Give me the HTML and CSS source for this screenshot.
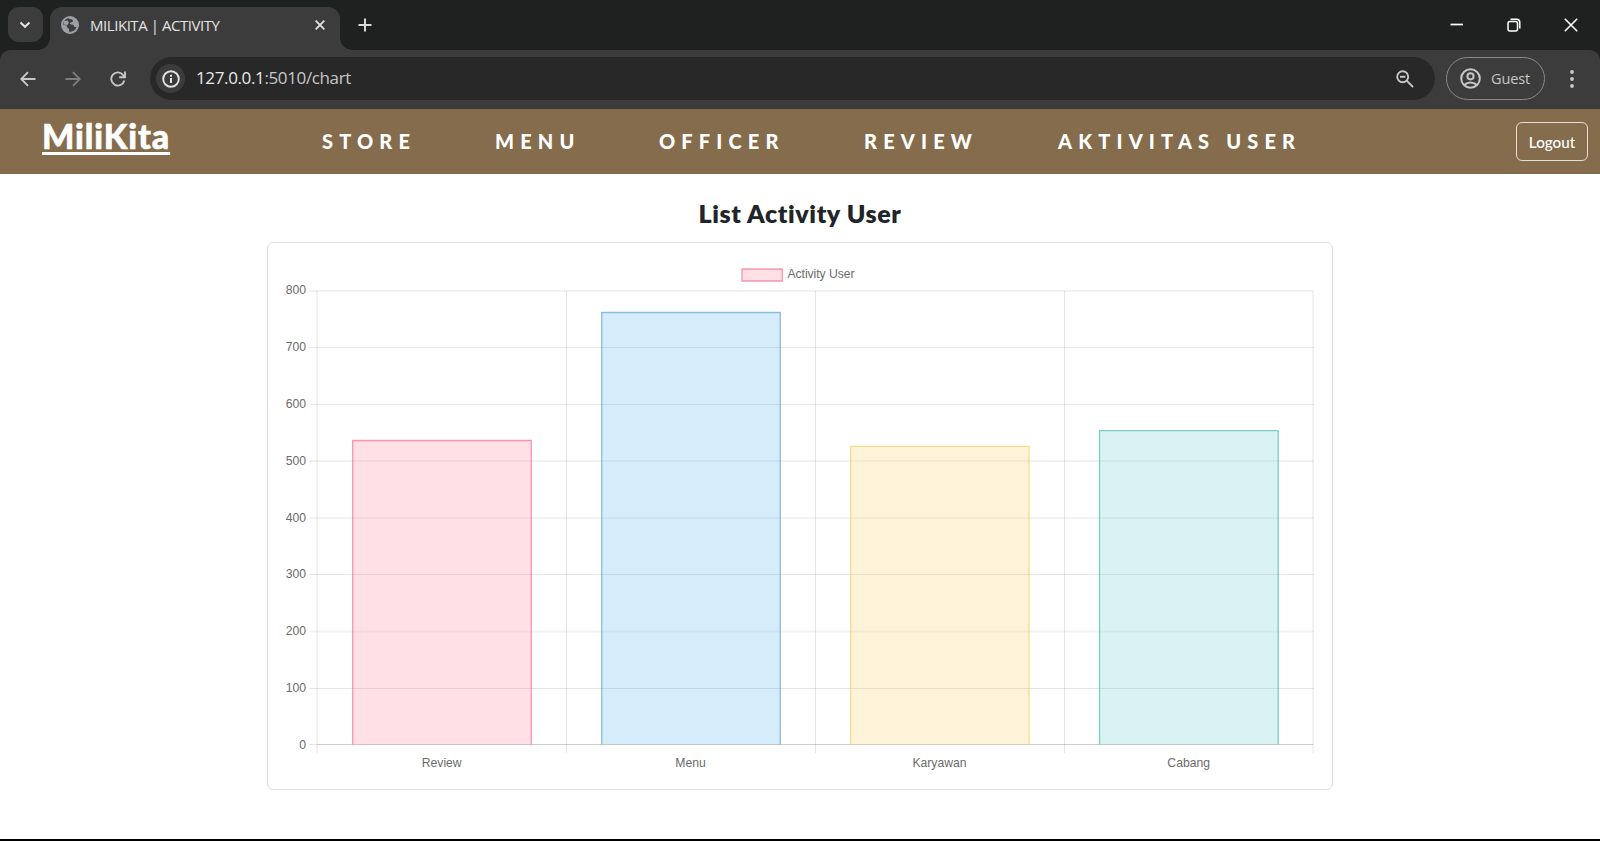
FILE: index.html
```html
<!DOCTYPE html>
<html lang="id">
<head>
<meta charset="utf-8">
<title>MILIKITA | ACTIVITY</title>
<link rel="stylesheet" href="styles.css">
</head>
<body>
<div class="tabstrip">
  <div class="tab-search"><svg width="12" height="8" viewBox="0 0 12 8"><path d="M1.5 1.5L6 5.8L10.5 1.5" fill="none" stroke="#e3e3e3" stroke-width="2"/></svg></div>
  <div class="tab">
    <svg class="globe" width="18" height="18" viewBox="0 0 18 18"><circle cx="9" cy="9" r="9" fill="#9aa0a6"/><path d="M7.500 2.200C8.500 3.500 12 2.800 12 5C12 6.500 9 6.200 9 7.500C9 9 12 8 12.800 9.500C13.300 10.500 12.500 11.200 15.500 11C14.500 14.500 11.500 15.800 8 15.800V13.500C8.500 12 6 12.500 6 10.500C6 9 4 9.500 2 8.500C2.200 5.500 4.500 2.800 7.500 2.200Z" fill="#3c3c3c"/><path d="M2.500 8.300L6 9.500L8 6.500L6.500 4.500L3 5Z" fill="#9aa0a6"/></svg>
    <span class="tab-title">MILIKITA | ACTIVITY</span>
    <svg class="tab-close" width="10" height="10" viewBox="0 0 10 10"><path d="M.7.7L9.300 9.300M9.300.7L.7 9.300" stroke="#e3e3e3" stroke-width="1.800"/></svg>
  </div>
  <svg class="new-tab" width="14" height="14" viewBox="0 0 14 14"><path d="M7 .5V13.500M.5 7H13.500" stroke="#dadada" stroke-width="2"/></svg>
  <div class="window-controls">
    <svg width="14" height="14" viewBox="0 0 14 14"><path d="M.5 6.500H13" stroke="#fff" stroke-width="1.700"/></svg>
    <svg width="14" height="14" viewBox="0 0 14 14" fill="none" stroke="#fff" stroke-width="1.500"><rect x="1" y="3.500" width="9.500" height="9.500" rx="2"/><path d="M3.500 1.200H9.500C11.800 1.200 12.800 2.300 12.800 4.500V10.500"/></svg>
    <svg width="14" height="14" viewBox="0 0 14 14"><path d="M.8.800L13.200 13.200M13.200.8L.8 13.200" stroke="#fff" stroke-width="1.600"/></svg>
  </div>
</div>
<div class="toolbar-wrap"><div class="toolbar">
  <svg class="back" width="16" height="16" viewBox="0 0 16 16" fill="none" stroke="#c7c7c7" stroke-width="1.900"><path d="M15.500 8H1.500M8 1.200L1.300 8L8 14.800"/></svg>
  <svg class="forward" width="16" height="16" viewBox="0 0 16 16" fill="none" stroke="#7d7d7d" stroke-width="1.900"><path d="M.5 8H14.500M8 1.200L14.700 8L8 14.800"/></svg>
  <svg class="reload" width="16" height="16" viewBox="0 0 16 16" fill="none" stroke="#c7c7c7" stroke-width="1.900"><path d="M14.300 9.500A6.600 6.600 0 1 1 13.300 4.200L14.500 6M15 .5V6.200H9.200"/></svg>
  <div class="address">
    <div class="site-info"><svg width="18" height="18" viewBox="0 0 18 18"><circle cx="9" cy="9" r="7.800" fill="none" stroke="#e3e3e3" stroke-width="1.900"/><path d="M9 8V13M9 4.800V6.800" stroke="#e3e3e3" stroke-width="2"/></svg></div>
    <span class="url"><b>127.0.0.1</b>:5010/chart</span>
    <svg class="zoom" width="18" height="18" viewBox="0 0 18 18" fill="none" stroke="#c7c7c7" stroke-width="1.900"><circle cx="6.700" cy="6.700" r="5.500"/><path d="M4 6.700H9.400M10.700 10.700L17 17"/></svg>
  </div>
  <div class="guest">
    <svg width="21" height="21" viewBox="0 0 21 21" fill="none" stroke="#c7c7c7" stroke-width="2"><circle cx="10.500" cy="10.500" r="9.300"/><circle cx="10.500" cy="8.300" r="3.100"/><path d="M4.300 17C7.500 13.700 13.500 13.700 16.700 17"/></svg>
    <span>Guest</span>
  </div>
  <svg class="menu-dots" width="4" height="18" viewBox="0 0 4 18" fill="#c7c7c7"><circle cx="2" cy="2" r="1.900"/><circle cx="2" cy="9" r="1.900"/><circle cx="2" cy="16" r="1.900"/></svg>
</div></div>

<nav class="navbar">
  <a class="brand">MiliKita</a>
  <div class="links">
    <a class="store">STORE</a><a class="menu">MENU</a><a class="officer">OFFICER</a><a class="review">REVIEW</a><a class="activity">AKTIVITAS USER</a>
  </div>
  <a class="logout">Logout</a>
</nav>

<main>
  <h1>List Activity User</h1>
  <div class="card">
    <svg class="chart" width="1064" height="546" viewBox="268 243 1064 546">
      <g class="grid">
        <path class="soft" d="M309.500 291H1313.500M309.500 461H1313.500M309.500 631.500H1313.500"/>
        <path d="M309.500 347.500H1313.500M309.500 404.500H1313.500M309.500 518H1313.500M309.500 574.500H1313.500M309.500 688.500H1313.500M309.500 744.500H1313.500"/>
        <path d="M566.500 291V753M815.500 291V753M1064.500 291V753"/>
        <path class="soft" d="M1313 291V753M317 291V753M317 291V744.500"/>
        <path d="M317 744.500H1313"/>
      </g>
      <g class="bars">
        <path class="pink" d="M352.700 744.500V440.500H531.300V744.500"/>
        <path class="blue" d="M601.700 744.500V312.500H780.300V744.500"/>
        <path class="yellow" d="M850.700 744.500V446.300H1029V744.500"/>
        <path class="teal" d="M1099.500 744.500V430.600H1278.200V744.500"/>
        <path class="pink" d="M742 269H782.300V281H742Z"/>
      </g>
      <g class="labels">
        <text x="787.500" y="278" textLength="67">Activity User</text>
        <g text-anchor="end">
          <text x="306" y="294.200">800</text><text x="306" y="351.400">700</text><text x="306" y="408">600</text><text x="306" y="464.800">500</text><text x="306" y="521.500">400</text><text x="306" y="578.200">300</text><text x="306" y="635">200</text><text x="306" y="692">100</text><text x="306" y="748.700">0</text>
        </g>
        <g text-anchor="middle">
          <text x="441.700" y="767">Review</text><text x="690.500" y="767">Menu</text><text x="939.500" y="767">Karyawan</text><text x="1188.700" y="767">Cabang</text>
        </g>
      </g>
    </svg>
  </div>
</main>
<div class="edge"></div>
</body>
</html>
```
FILE: styles.css
```css
* { box-sizing: border-box; }
body { margin: 0; height: 841px; display: flex; flex-direction: column; overflow: hidden; background: #fff; font-family: Lato, sans-serif; }
svg { display: block; flex: none; }

.tabstrip { height: 50px; flex: none; display: flex; background: #1f2120; padding-left: 7.500px; font-family: "Open Sans", sans-serif; }
.tab-search { width: 35px; height: 35px; margin-top: 7px; border-radius: 11px; background: #3c3c3c; display: flex; align-items: center; justify-content: center; }
.tab { position: relative; width: 290px; height: 43px; margin: 7px 0 0 7.500px; border-radius: 12px 12px 0 0; background: #3c3c3c; display: flex; align-items: center; padding: 0 15.500px 7px 11px; }
.tab::before, .tab::after { content: ""; position: absolute; bottom: 0; width: 12px; height: 12px; }
.tab::before { right: 100%; background: radial-gradient(circle at 0 0, transparent 11.500px, #3c3c3c 12px); }
.tab::after { left: 100%; background: radial-gradient(circle at 100% 0, transparent 11.500px, #3c3c3c 12px); }
.tab-title { margin-left: 11px; font-size: 15px; letter-spacing: -0.450px; color: #e3e3e3; white-space: nowrap; }
.tab-close { margin-left: auto; }
.new-tab { margin: 18px 0 0 18px; }
.window-controls { margin: 17.500px 22px 0 auto; display: flex; gap: 43px; }

.toolbar-wrap { height: 59px; flex: none; background: #1f2120; }
.toolbar { height: 59px; background: #3c3c3c; border-radius: 10px 10px 0 0; display: flex; align-items: center; padding: 0 26px 2px 20px; font-family: "Open Sans", sans-serif; }
.forward { margin-left: 28.500px; }
.reload { margin-left: 29px; }
.address { width: 1285px; height: 43px; margin-left: 24px; border-radius: 22px; background: #282828; display: flex; align-items: center; padding: 0 21px 0 6.500px; }
.site-info { width: 29px; height: 29px; border-radius: 50%; background: #3c3c3c; display: flex; align-items: center; justify-content: center; }
.url { margin-left: 11px; font-size: 17px; letter-spacing: -0.370px; color: #c7c7c7; line-height: 22px; padding-bottom: 1px; }
.url b { font-weight: 400; color: #e8e8e8; }
.zoom { margin-left: auto; }
.guest { width: 99px; height: 43px; margin-left: 11.500px; border: 1px solid #8a8a8a; border-radius: 22px; display: flex; align-items: center; gap: 10px; padding-left: 13px; color: #c7c7c7; font-size: 14.500px; letter-spacing: -0.150px; }
.menu-dots { margin-left: auto; }

.navbar { height: 65px; flex: none; display: flex; align-items: center; background: #846c4c; color: #fff; padding: 0 12px 0 42px; }
.brand { width: 127px; height: 47px; line-height: 36px; font-size: 34px; font-weight: 900; letter-spacing: 0.900px; -webkit-text-stroke: 0.600px #fff; text-decoration: underline; text-decoration-thickness: 3px; text-underline-offset: 3px; text-decoration-skip-ink: none; white-space: nowrap; }
.links { display: flex; margin-left: 153px; padding-bottom: 2px; font-size: 20px; font-weight: 900; letter-spacing: 6.150px; white-space: nowrap; }
.store { width: 173px; }
.menu { width: 164px; }
.officer { width: 205px; }
.review { width: 194px; }
.logout { width: 72px; height: 39px; margin-left: auto; border: 1px solid #e4ded5; border-radius: 6px; font-size: 15.200px; line-height: 38px; text-align: center; font-weight: 500; }

main { flex: 1; display: flex; flex-direction: column; align-items: center; }
h1 { margin: 24px 0 0; height: 44px; line-height: 30px; font-size: 25px; font-weight: 800; letter-spacing: 0.600px; color: #212529; white-space: nowrap; }
.card { width: 1066px; height: 548px; border: 1px solid #dfdfdf; border-radius: 6px; }
.grid path { fill: none; stroke: rgba(0, 0, 0, 0.1); stroke-width: 1; }
.grid .soft { stroke: rgba(0, 0, 0, 0.05); stroke-width: 2; }
.bars path { stroke-width: 1.300; }
.pink { fill: rgba(255, 99, 132, 0.2); stroke: rgba(240, 90, 130, 0.6); }
.blue { fill: rgba(54, 162, 235, 0.2); stroke: rgba(54, 145, 205, 0.55); }
.yellow { fill: rgba(255, 200, 86, 0.22); stroke: rgba(250, 205, 95, 0.7); }
.teal { fill: rgba(75, 192, 192, 0.2); stroke: rgba(75, 185, 180, 0.7); }
.labels { font-family: "Liberation Sans", Arial, sans-serif; font-size: 12.200px; fill: #6c6c6c; }
.edge { height: 2px; flex: none; background: #000; }
```
